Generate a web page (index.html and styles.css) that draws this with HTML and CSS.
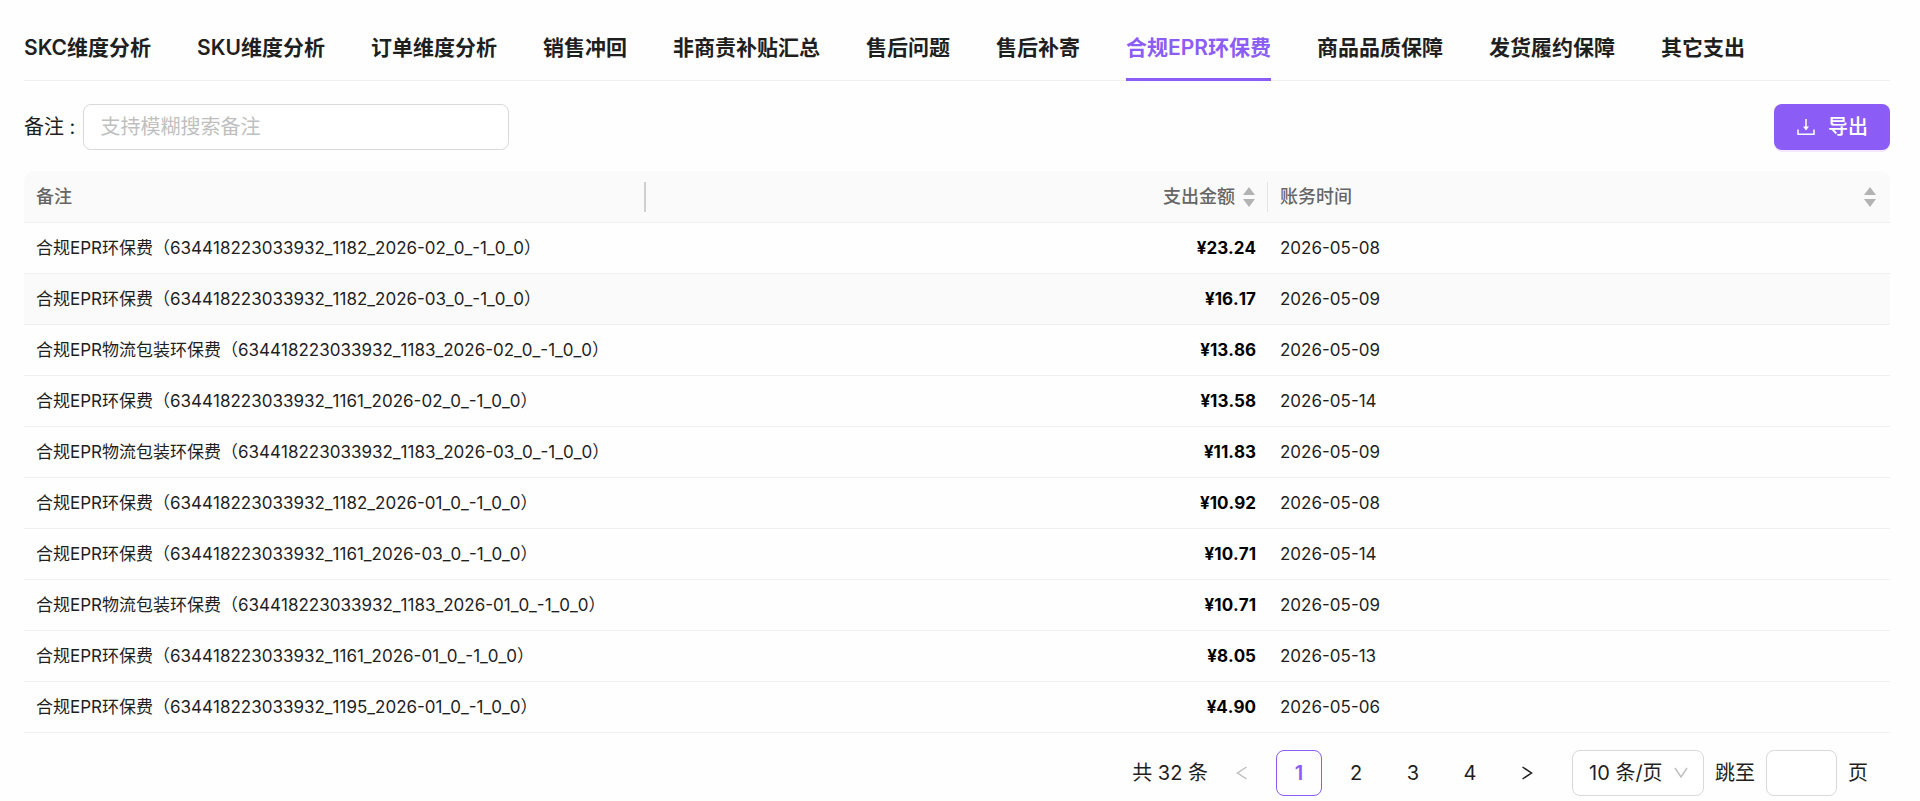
FILE: index.html
```html
<!DOCTYPE html>
<html lang="zh-CN">
<head>
    <meta charset="UTF-8">
    <meta name="viewport" content="width=device-width, initial-scale=1.0">
    <title>合规EPR环保费</title>
    <link rel="stylesheet" href="styles.css">
</head>
<body>
    <div class="page">
        <!-- Tabs -->
        <div class="tabs" role="tablist">
            <button class="tab" role="tab">SKC维度分析</button>
            <button class="tab" role="tab">SKU维度分析</button>
            <button class="tab" role="tab">订单维度分析</button>
            <button class="tab" role="tab">销售冲回</button>
            <button class="tab" role="tab">非商责补贴汇总</button>
            <button class="tab" role="tab">售后问题</button>
            <button class="tab" role="tab">售后补寄</button>
            <button class="tab active" role="tab" aria-selected="true">合规EPR环保费</button>
            <button class="tab" role="tab">商品品质保障</button>
            <button class="tab" role="tab">发货履约保障</button>
            <button class="tab" role="tab">其它支出</button>
        </div>

        <!-- Search and export -->
        <div class="toolbar">
            <div class="field">
                <label for="remark">备注 :</label>
                <input type="text" id="remark" class="input search-input" placeholder="支持模糊搜索备注">
            </div>
            <button class="button-primary">
                <svg class="icon" viewBox="0 0 20 20" width="20" height="20" fill="none" stroke="currentColor" stroke-width="1.5">
                    <path d="M2 12.5V17.2H18V12.5M10 2V11"/>
                    <path d="M7 9.5H13L10 13.5Z" fill="currentColor" stroke="none"/>
                </svg>
                <span>导出</span>
            </button>
        </div>

        <!-- Expense table -->
        <table class="table">
            <thead>
                <tr>
                    <th><div class="head-cell first"><span>备注</span></div></th>
                    <th>
                        <div class="head-cell right">
                            <span>支出金额</span>
                            <svg viewBox="0 0 12 20" width="12" height="20" fill="#b3b3b3"><path d="M6 0L12 8H0ZM0 12H12L6 20Z"/></svg>
                        </div>
                    </th>
                    <th>
                        <div class="head-cell between">
                            <span>账务时间</span>
                            <svg viewBox="0 0 12 20" width="12" height="20" fill="#b3b3b3"><path d="M6 0L12 8H0ZM0 12H12L6 20Z"/></svg>
                        </div>
                    </th>
                </tr>
            </thead>
            <tbody>
                <tr><td>合规EPR环保费（634418223033932_1182_2026-02_0_-1_0_0）</td><td class="amount">¥23.24</td><td>2026-05-08</td></tr>
                <tr class="hovered"><td>合规EPR环保费（634418223033932_1182_2026-03_0_-1_0_0）</td><td class="amount">¥16.17</td><td>2026-05-09</td></tr>
                <tr><td>合规EPR物流包装环保费（634418223033932_1183_2026-02_0_-1_0_0）</td><td class="amount">¥13.86</td><td>2026-05-09</td></tr>
                <tr><td>合规EPR环保费（634418223033932_1161_2026-02_0_-1_0_0）</td><td class="amount">¥13.58</td><td>2026-05-14</td></tr>
                <tr><td>合规EPR物流包装环保费（634418223033932_1183_2026-03_0_-1_0_0）</td><td class="amount">¥11.83</td><td>2026-05-09</td></tr>
                <tr><td>合规EPR环保费（634418223033932_1182_2026-01_0_-1_0_0）</td><td class="amount">¥10.92</td><td>2026-05-08</td></tr>
                <tr><td>合规EPR环保费（634418223033932_1161_2026-03_0_-1_0_0）</td><td class="amount">¥10.71</td><td>2026-05-14</td></tr>
                <tr><td>合规EPR物流包装环保费（634418223033932_1183_2026-01_0_-1_0_0）</td><td class="amount">¥10.71</td><td>2026-05-09</td></tr>
                <tr><td>合规EPR环保费（634418223033932_1161_2026-01_0_-1_0_0）</td><td class="amount">¥8.05</td><td>2026-05-13</td></tr>
                <tr><td>合规EPR环保费（634418223033932_1195_2026-01_0_-1_0_0）</td><td class="amount">¥4.90</td><td>2026-05-06</td></tr>
            </tbody>
        </table>

        <!-- Pagination -->
        <div class="pagination">
            <span class="total">共 32 条</span>
            <div class="pages">
                <button class="page-button" disabled aria-label="上一页">
                    <svg viewBox="0 0 12 16" width="12" height="16" fill="none" stroke="currentColor" stroke-width="1.5"><path d="M10.5 2L1.5 8L10.5 14"/></svg>
                </button>
                <button class="page-button current">1</button>
                <button class="page-button">2</button>
                <button class="page-button">3</button>
                <button class="page-button">4</button>
                <button class="page-button" aria-label="下一页">
                    <svg viewBox="0 0 12 16" width="12" height="16" fill="none" stroke="currentColor" stroke-width="1.5"><path d="M1.5 2L10.5 8L1.5 14"/></svg>
                </button>
            </div>
            <div class="select-wrap">
                <select class="input size-select" aria-label="每页条数">
                    <option>10 条/页</option>
                    <option>20 条/页</option>
                    <option>50 条/页</option>
                </select>
                <svg class="select-arrow" viewBox="0 0 14 12" width="14" height="12" fill="none" stroke="#bfbfbf" stroke-width="1.5"><path d="M1 1L7 10L13 1"/></svg>
            </div>
            <label for="jump">跳至</label>
            <input type="text" id="jump" class="input jump-input">
            <span>页</span>
        </div>
    </div>
</body>
</html>
```
FILE: styles.css
```css
* {
    box-sizing: border-box;
}
body {
    margin: 0;
    background: #fefefe;
    color: #1f1f1f;
    font-family: Inter, "Noto Sans CJK SC", sans-serif;
    font-size: 20px;
    line-height: 30px;
}
button, input, select {
    font: inherit;
    color: inherit;
}
button {
    cursor: pointer;
}
.page {
    padding: 16px 30px 0 24px;
}
.tabs {
    display: flex;
    gap: 46px;
    border-bottom: 1px solid #f0f0f0;
}
.tab {
    padding: 17px 0 15px;
    margin-bottom: -1px;
    border: none;
    border-bottom: 3px solid transparent;
    background: none;
    font-size: 21px;
    font-weight: 600;
    white-space: nowrap;
}
.tab.active {
    color: #8b5cf6;
    border-bottom-color: #8b5cf6;
}
.toolbar {
    display: flex;
    justify-content: space-between;
    margin: 23px 0 21px;
}
.field {
    display: flex;
    align-items: center;
    gap: 8px;
}
.input {
    height: 46px;
    border: 1px solid #d9d9d9;
    border-radius: 8px;
    background: #fff;
    outline: none;
}
.input::placeholder {
    color: #bfbfbf;
}
.search-input {
    width: 426px;
    padding: 0 16px;
}
.button-primary {
    display: flex;
    align-items: center;
    gap: 12px;
    height: 46px;
    padding: 0 22px;
    border: none;
    border-radius: 8px;
    background: #8b5cf6;
    box-shadow: 0 2px 0 #f3e8ff;
    color: #fff;
    font-weight: 500;
}
.table {
    width: 100%;
    table-layout: fixed;
    border-collapse: separate;
    border-spacing: 0;
    font-size: 17px;
    font-kerning: none;
}
.table th {
    height: 52px;
    padding: 0;
    border-bottom: 1px solid #f0f0f0;
    background: #fafafa;
    color: #666;
    font-size: 18px;
    font-weight: 500;
}
.table th:first-child {
    border-top-left-radius: 10px;
}
.table th:last-child {
    border-top-right-radius: 10px;
}
.head-cell {
    display: flex;
    align-items: center;
    gap: 8px;
    padding: 0 12px;
    border-right: 1px solid #e5e5e5;
}
.head-cell.first {
    border-right: 2px solid #d0d0d0;
}
.head-cell.right {
    justify-content: flex-end;
}
.head-cell.between {
    justify-content: space-between;
    border-right: none;
    padding-right: 14px;
}
.table td {
    height: 51px;
    padding: 0 12px;
    border-bottom: 1px solid #f0f0f0;
    white-space: nowrap;
}
.table .hovered td {
    background: #fafafa;
}
.table .amount {
    color: #000;
    font-weight: 700;
    text-align: right;
}
.pagination {
    display: flex;
    align-items: center;
    justify-content: flex-end;
    gap: 11px;
    padding: 17px 22px 4px 0;
}
.pages {
    display: flex;
    gap: 11px;
    margin-right: 11px;
}
.page-button {
    display: flex;
    align-items: center;
    justify-content: center;
    width: 46px;
    height: 46px;
    padding: 0;
    border: 1px solid transparent;
    border-radius: 8px;
    background: none;
}
.page-button:disabled {
    color: #bfbfbf;
    cursor: default;
}
.page-button.current {
    border-color: #8b5cf6;
    color: #8b5cf6;
    font-weight: 600;
}
.select-wrap {
    position: relative;
}
.size-select {
    width: 132px;
    padding: 0 16px;
    appearance: none;
}
.select-arrow {
    position: absolute;
    top: 17px;
    right: 16px;
    pointer-events: none;
}
.jump-input {
    width: 71px;
    padding: 0 12px;
}
```
